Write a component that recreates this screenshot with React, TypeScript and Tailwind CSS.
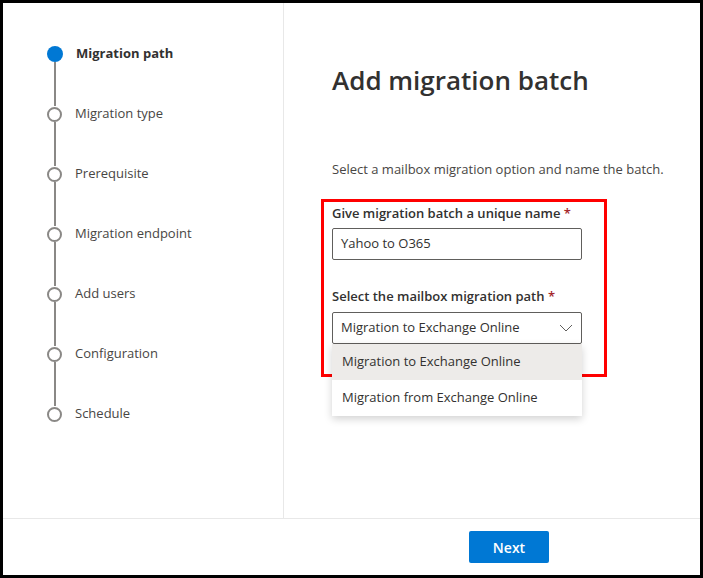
const STEPS = [
  "Migration path",
  "Migration type",
  "Prerequisite",
  "Migration endpoint",
  "Add users",
  "Configuration",
  "Schedule",
];

export default function App() {
  return (
    <div
      className="w-[703px] h-[578px] border-[3px] border-black bg-white flex flex-col text-[#323130]"
      style={{ fontFamily: '"Open Sans", "Noto Sans", sans-serif' }}
    >
      <div className="flex flex-1 min-h-0">
        {/* Steps */}
        <div className="w-[281px] border-r border-[#e8e8e8] pl-[44px] pt-[43px]">
          {STEPS.map((s, i) => (
            <div key={s} className="flex flex-col">
              <div className="flex items-center h-[16px]">
                {i === 0 ? (
                  <span className="w-[16px] h-[16px] rounded-full bg-[#0078d4]" />
                ) : (
                  <span className="w-[15px] h-[15px] rounded-full border-2 border-[#8a8886] bg-white" />
                )}
                <span className={`ml-[13px] text-[13px] ${i === 0 ? "font-bold text-[#323130]" : "text-[#484644]"}`}>{s}</span>
              </div>
              {i < STEPS.length - 1 && <div className="ml-[7px] w-[2px] h-[44px] bg-[#8a8886]" />}
            </div>
          ))}
        </div>
        {/* Main */}
        <div className="flex-1 pl-[48px] pt-[60px] relative">
          <h1 className="text-[26px] font-semibold text-[#323130] leading-[34px]">Add migration batch</h1>
          <p className="mt-[63px] text-[13px] text-[#484644]">Select a mailbox migration option and name the batch.</p>
          <div className="mt-[24px] text-[13px] font-semibold text-[#323130]">
            Give migration batch a unique name <span className="text-[#a4262c]">*</span>
          </div>
          <div className="mt-[5px] w-[250px] h-[32px] border border-[#605e5c] rounded-[2px] px-[8px] flex items-center text-[13px]">Yahoo to O365</div>
          <div className="mt-[27px] text-[13px] font-semibold text-[#323130]">
            Select the mailbox migration path <span className="text-[#a4262c]">*</span>
          </div>
          <div className="relative mt-[5px] w-[250px]">
            <div className="h-[32px] border border-[#605e5c] rounded-[2px] px-[8px] flex items-center justify-between text-[13px]">
              <span>Migration to Exchange Online</span>
              <svg width="14" height="8" viewBox="0 0 14 8" fill="none" stroke="#605e5c" strokeWidth="1">
                <path d="M1 1l6 6 6-6" />
              </svg>
            </div>
            <div className="absolute left-0 top-[32px] w-[250px] bg-white shadow-[0_3px_8px_rgba(0,0,0,0.18)] text-[13px] z-30">
              <div className="h-[36px] px-[10px] flex items-center bg-[#edebe9]">Migration to Exchange Online</div>
              <div className="h-[36px] px-[10px] flex items-center">Migration from Exchange Online</div>
            </div>
          </div>
          <div className="absolute left-[37px] top-[196px] w-[286px] h-[178px] border-[3px] border-[#ff0000] pointer-events-none z-20" />
        </div>
      </div>
      <div className="h-[57px] border-t border-[#e8e8e8] flex items-center pl-[466px]">
        <button className="w-[80px] h-[32px] rounded-[2px] bg-[#0078d4] text-white text-[14px] font-semibold">Next</button>
      </div>
    </div>
  );
}
